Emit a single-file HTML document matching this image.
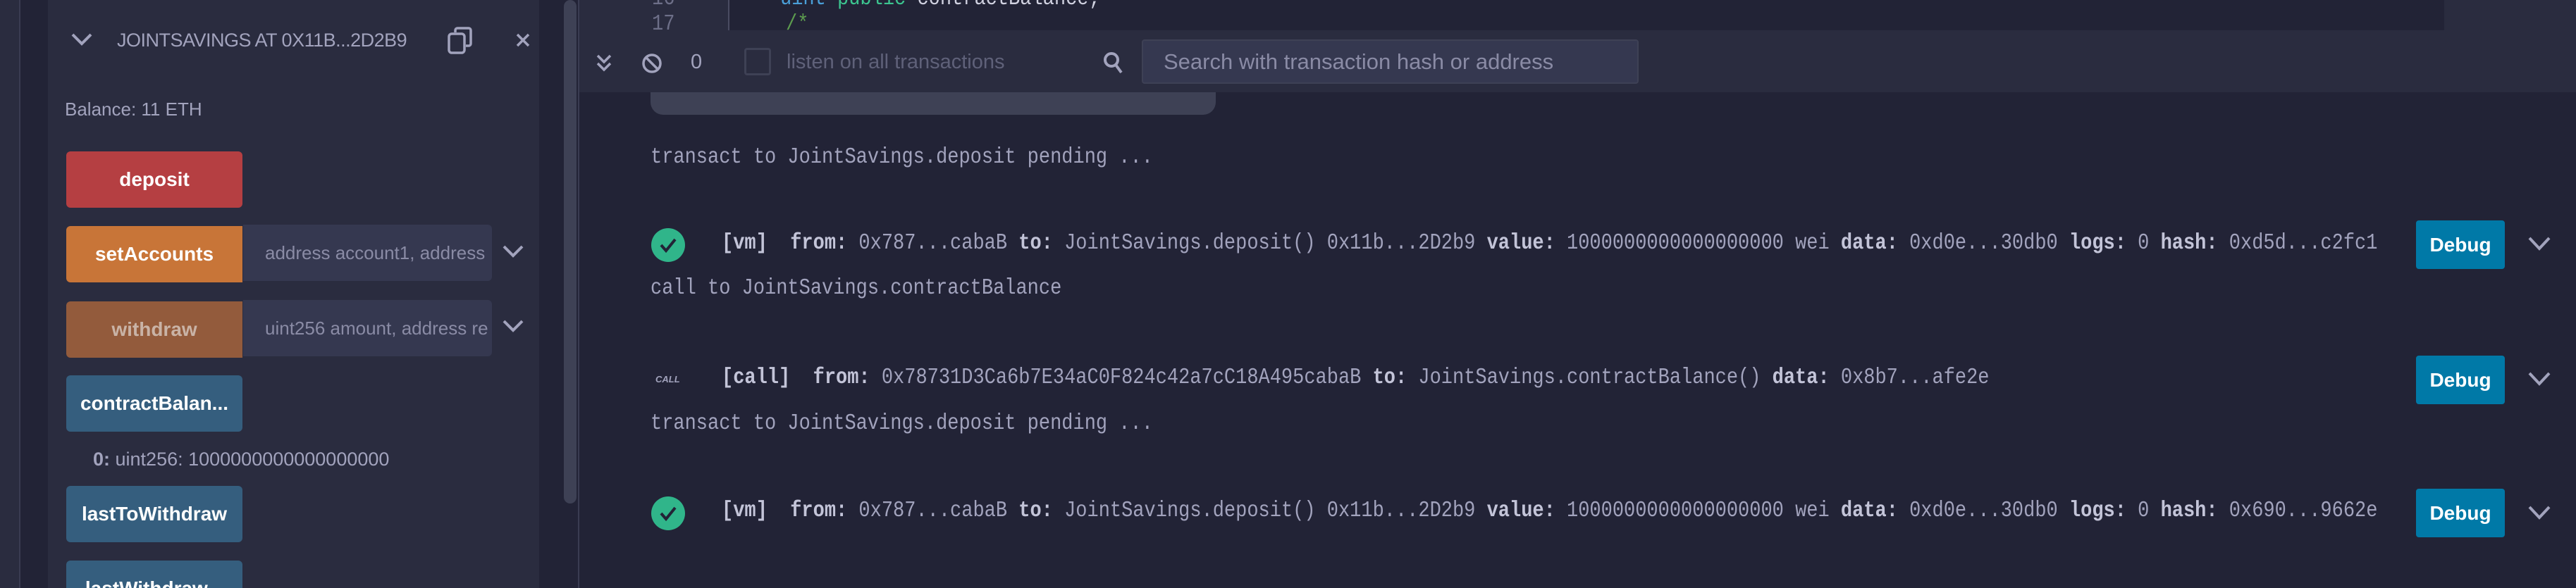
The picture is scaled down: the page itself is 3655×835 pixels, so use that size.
<!DOCTYPE html>
<html style="width:3655px;height:835px;overflow:hidden"><head><meta charset="utf-8"><style>
*{margin:0;padding:0;box-sizing:border-box}
body{width:3655px;height:835px;background:#222336;position:relative;overflow:hidden;font-family:"Liberation Sans",sans-serif;color:#a2a3bd}
.a{position:absolute}
.btn{position:absolute;left:94px;width:250px;height:80px;border-radius:6px;color:#fff;font-weight:bold;font-size:28px;display:flex;align-items:center;justify-content:center}
.inp{position:absolute;left:345px;width:353px;height:80px;background:#353850;border-radius:0 6px 6px 0;font-size:26px;color:#8a8ba5;padding-left:31px;display:flex;align-items:center;white-space:nowrap;overflow:hidden}
.mono{font-family:"Liberation Mono",monospace;font-size:27px;white-space:pre;color:#a2a3bd;transform:scaleY(1.15);transform-origin:left center}
.mono b{color:#c3c4d8}
.dbg{position:absolute;left:3428px;width:126px;height:69px;background:#0079a7;border-radius:4px;color:#fff;font-weight:bold;font-size:28px;display:flex;align-items:center;justify-content:center}
.chev{position:absolute}
</style></head><body>
<div class="a" style="left:0;top:0;width:29px;height:835px;background:#2a2c3f;border-right:2px solid #3a3c52"></div>
<div class="a" style="left:68px;top:0;width:697px;height:835px;background:#2a2c3f"></div>
<div class="a" style="left:800px;top:0;width:18px;height:715px;background:#3e4155;border-radius:9px"></div>
<div class="a" style="left:820px;top:0;width:2px;height:835px;background:#3a3c52"></div>

<svg class="a" style="left:100px;top:45px" width="32" height="22"><path d="M3 4 L16 17 L29 4" fill="none" stroke="#a2a3bd" stroke-width="4"/></svg>
<div class="a" style="left:166px;top:42px;font-size:27px;color:#a2a3bd;letter-spacing:-0.5px;white-space:nowrap">JOINTSAVINGS AT 0X11B...2D2B9</div>
<svg class="a" style="left:634px;top:37px" width="38" height="42"><rect x="3" y="11" width="22" height="27" rx="4" fill="none" stroke="#a2a3bd" stroke-width="3.5"/><path d="M12 9 V6 a3 3 0 0 1 3-3 H31 a3 3 0 0 1 3 3 V25 a3 3 0 0 1-3 3 H27" fill="none" stroke="#a2a3bd" stroke-width="3.5"/></svg>
<svg class="a" style="left:732px;top:47px" width="20" height="20"><path d="M2 2 L18 18 M18 2 L2 18" stroke="#a2a3bd" stroke-width="3.5"/></svg>
<div class="a" style="left:92px;top:140px;font-size:26px">Balance: 11 ETH</div>

<div class="btn" style="top:215px;background:#b53f42">deposit</div>
<div class="btn" style="top:321px;background:#c87538;border-radius:6px 0 0 6px">setAccounts</div>
<div class="inp" style="top:319px">address account1, address</div>
<svg class="a" style="left:712px;top:346px" width="32" height="22"><path d="M3 4 L16 17 L29 4" fill="none" stroke="#a2a3bd" stroke-width="4"/></svg>
<div class="btn" style="top:428px;background:#935b3c;color:#c9b3a6;border-radius:6px 0 0 6px">withdraw</div>
<div class="inp" style="top:426px">uint256 amount, address re</div>
<svg class="a" style="left:712px;top:452px" width="32" height="22"><path d="M3 4 L16 17 L29 4" fill="none" stroke="#a2a3bd" stroke-width="4"/></svg>
<div class="btn" style="top:533px;background:#355e7e">contractBalan...</div>
<div class="a" style="left:132px;top:637px;font-size:27px;white-space:nowrap"><b>0:</b> uint256: 1000000000000000000</div>
<div class="btn" style="top:690px;background:#355e7e">lastToWithdraw</div>
<div class="btn" style="top:796px;background:#355e7e">lastWithdraw...</div>

<div class="a" style="left:822px;top:0;width:211px;height:43px;background:#2a2c3f"></div>
<div class="a" style="left:1033px;top:0;width:2px;height:43px;background:#4a4c62"></div>
<div class="a mono" style="left:925px;top:-16px;color:#6d6f88">16</div>
<div class="a mono" style="left:925px;top:20px;color:#6d6f88">17</div>
<div class="a mono" style="left:1107px;top:-16px"><span style="color:#4a9fd8">uint</span> <span style="color:#3cc48f">public</span> <span style="color:#d0d1e0">contractBalance;</span></div>
<div class="a mono" style="left:1115px;top:20px;color:#5d9c4f">/*</div>
<div class="a" style="left:3468px;top:0;width:187px;height:43px;background:#2a2c3f"></div>

<div class="a" style="left:822px;top:43px;width:2833px;height:88px;background:#2a2c3f"></div>
<svg class="a" style="left:845px;top:76px" width="24" height="28"><path d="M3 3 L12 12 L21 3 M3 14 L12 23 L21 14" fill="none" stroke="#a2a3bd" stroke-width="3.5"/></svg>
<svg class="a" style="left:909px;top:74px" width="32" height="32"><circle cx="16" cy="16" r="12" fill="none" stroke="#a2a3bd" stroke-width="3.5"/><path d="M8 8 L24 24" stroke="#a2a3bd" stroke-width="3.5"/></svg>
<div class="a" style="left:980px;top:72px;font-size:29px">0</div>
<div class="a" style="left:1056px;top:68px;width:38px;height:39px;border:3px solid #3e4155;border-radius:4px"></div>
<div class="a" style="left:1116px;top:72px;font-size:29px;color:#5f6179;white-space:nowrap">listen on all transactions</div>
<svg class="a" style="left:1564px;top:72px" width="32" height="34"><circle cx="13" cy="13" r="9" fill="none" stroke="#a2a3bd" stroke-width="4"/><path d="M19 20 L27 31" stroke="#a2a3bd" stroke-width="4"/></svg>
<div class="a" style="left:1620px;top:56px;width:705px;height:63px;background:#353850;border:2px solid #3e4155;border-radius:4px"></div>
<div class="a" style="left:1651px;top:70px;font-size:31px;color:#8a8ba5;white-space:nowrap">Search with transaction hash or address</div>

<div class="a" style="left:923px;top:131px;width:802px;height:32px;background:#3e4155;border-radius:0 0 18px 18px"></div>
<div class="a mono" style="left:923px;top:209px">transact to JointSavings.deposit pending ...</div>

<svg class="a" style="left:923px;top:323px" width="50" height="50"><circle cx="25" cy="25" r="24" fill="#30b58a"/><path d="M15 25 L22 33 L35 17" fill="none" stroke="#222336" stroke-width="4"/></svg>
<div class="a mono" style="left:1024px;top:331px"><b>[vm]</b>  <b>from:</b> 0x787...cabaB <b>to:</b> JointSavings.deposit() 0x11b...2D2b9 <b>value:</b> 1000000000000000000 wei <b>data:</b> 0xd0e...30db0 <b>logs:</b> 0 <b>hash:</b> 0xd5d...c2fc1</div>
<div class="dbg" style="top:313px">Debug</div>
<svg class="chev" style="left:3586px;top:334px" width="34" height="24"><path d="M3 4 L17 19 L31 4" fill="none" stroke="#a2a3bd" stroke-width="4"/></svg>
<div class="a mono" style="left:923px;top:395px">call to JointSavings.contractBalance</div>

<div class="a" style="left:930px;top:531px;font-size:13px;font-style:italic;font-weight:bold;color:#a2a3bd">CALL</div>
<div class="a mono" style="left:1024px;top:522px"><b>[call]</b>  <b>from:</b> 0x78731D3Ca6b7E34aC0F824c42a7cC18A495cabaB <b>to:</b> JointSavings.contractBalance() <b>data:</b> 0x8b7...afe2e</div>
<div class="dbg" style="top:505px">Debug</div>
<svg class="chev" style="left:3586px;top:526px" width="34" height="24"><path d="M3 4 L17 19 L31 4" fill="none" stroke="#a2a3bd" stroke-width="4"/></svg>
<div class="a mono" style="left:923px;top:587px">transact to JointSavings.deposit pending ...</div>

<svg class="a" style="left:923px;top:704px" width="50" height="50"><circle cx="25" cy="25" r="24" fill="#30b58a"/><path d="M15 25 L22 33 L35 17" fill="none" stroke="#222336" stroke-width="4"/></svg>
<div class="a mono" style="left:1024px;top:711px"><b>[vm]</b>  <b>from:</b> 0x787...cabaB <b>to:</b> JointSavings.deposit() 0x11b...2D2b9 <b>value:</b> 1000000000000000000 wei <b>data:</b> 0xd0e...30db0 <b>logs:</b> 0 <b>hash:</b> 0x690...9662e</div>
<div class="dbg" style="top:694px">Debug</div>
<svg class="chev" style="left:3586px;top:716px" width="34" height="24"><path d="M3 4 L17 19 L31 4" fill="none" stroke="#a2a3bd" stroke-width="4"/></svg>
</body></html>
